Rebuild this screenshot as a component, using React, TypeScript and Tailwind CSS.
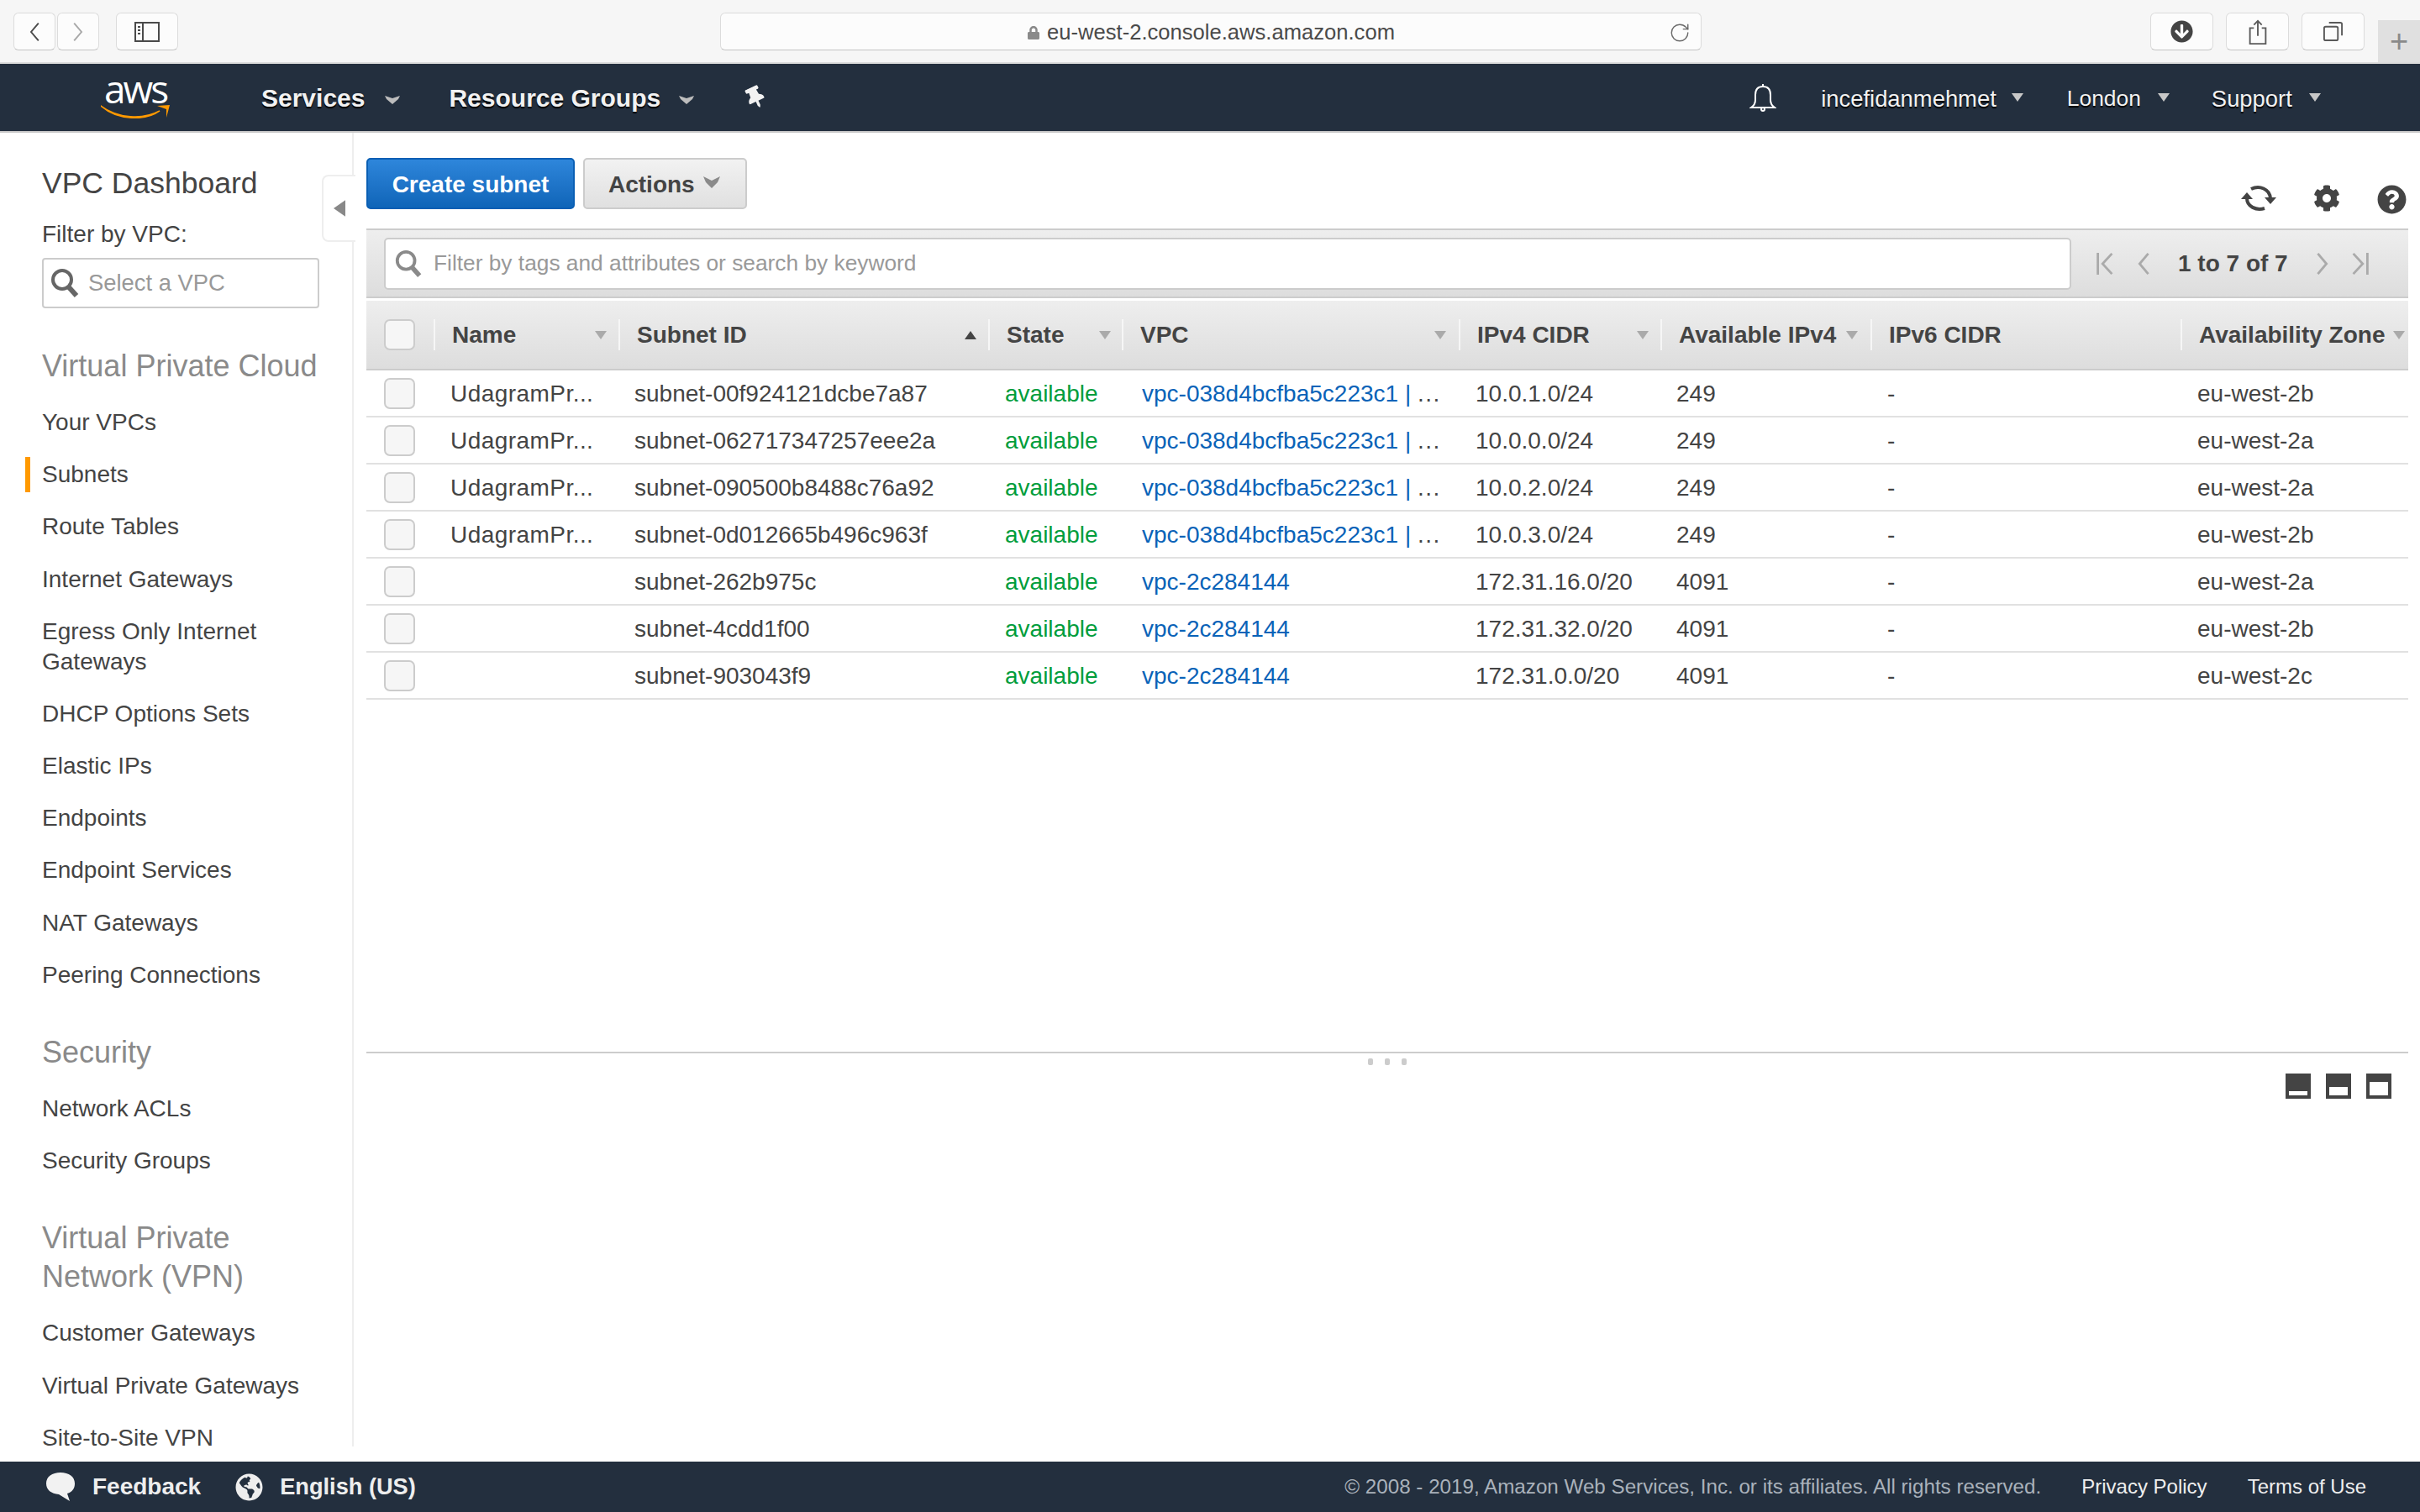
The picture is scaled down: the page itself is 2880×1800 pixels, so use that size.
import { RotateCw } from 'lucide-react';
import { FaArrowCircleDown, FaCog, FaGlobeAmericas, FaLock, FaQuestionCircle, FaThumbtack } from 'react-icons/fa';

const COLS = 'grid grid-cols-[80px_220px_440px_159px_401px_240px_250px_369px_271px]';

const HEADERS = [
  { label: 'Name', arrow: 'down', pad: 'pr-[14px]' },
  { label: 'Subnet ID', arrow: 'up', pad: 'pr-[14px]' },
  { label: 'State', arrow: 'down', pad: 'pr-[13px]' },
  { label: 'VPC', arrow: 'down', pad: 'pr-[15px]' },
  { label: 'IPv4 CIDR', arrow: 'down', pad: 'pr-[14px]' },
  { label: 'Available IPv4', arrow: 'down', pad: 'pr-[15px]' },
  { label: 'IPv6 CIDR', arrow: '', pad: '' },
  { label: 'Availability Zone', arrow: 'down', pad: 'pr-[4px]' },
];

const LONG_VPC = 'vpc-038d4bcfba5c223c1';

const ROWS = [
  ['UdagramPr...', 'subnet-00f924121dcbe7a87', LONG_VPC, '10.0.1.0/24', '249', 'eu-west-2b'],
  ['UdagramPr...', 'subnet-062717347257eee2a', LONG_VPC, '10.0.0.0/24', '249', 'eu-west-2a'],
  ['UdagramPr...', 'subnet-090500b8488c76a92', LONG_VPC, '10.0.2.0/24', '249', 'eu-west-2a'],
  ['UdagramPr...', 'subnet-0d012665b496c963f', LONG_VPC, '10.0.3.0/24', '249', 'eu-west-2b'],
  ['', 'subnet-262b975c', 'vpc-2c284144', '172.31.16.0/20', '4091', 'eu-west-2a'],
  ['', 'subnet-4cdd1f00', 'vpc-2c284144', '172.31.32.0/20', '4091', 'eu-west-2b'],
  ['', 'subnet-903043f9', 'vpc-2c284144', '172.31.0.0/20', '4091', 'eu-west-2c'],
];

const NAV_GROUPS = [
  {
    title: ['Virtual Private Cloud'],
    items: [
      'Your VPCs',
      'Subnets',
      'Route Tables',
      'Internet Gateways',
      'Egress Only Internet Gateways',
      'DHCP Options Sets',
      'Elastic IPs',
      'Endpoints',
      'Endpoint Services',
      'NAT Gateways',
      'Peering Connections',
    ],
  },
  { title: ['Security'], items: ['Network ACLs', 'Security Groups'] },
  {
    title: ['Virtual Private', 'Network (VPN)'],
    items: ['Customer Gateways', 'Virtual Private Gateways', 'Site-to-Site VPN'],
  },
];

const Caret = ({ className }: { className: string }) => (
  <svg viewBox="0 0 14 10" className={className} fill="currentColor">
    <path d="M0 0h14L7 10z" />
  </svg>
);

const NavChevron = () => (
  <svg viewBox="0 0 18 11" className="mt-[4px] h-[11px] w-[18px]" fill="#bdbdbd">
    <path d="M0 1l9 3 9-3-2 4-7 6-7-6z" />
  </svg>
);

const BrowserButton = ({ className, children }: { className: string; children: React.ReactNode }) => (
  <div className={`flex h-[45px] items-center justify-center rounded-[6px] border border-[#dcdcdc] border-b-[#c4c4c4] bg-[#fcfcfc] ${className}`}>
    {children}
  </div>
);

const BrowserBar = () => (
  <div className="flex h-[76px] shrink-0 border-b-2 border-[#dcdcdc] bg-[#f6f6f6] pt-[15px]">
    <BrowserButton className="ml-[16px] w-[50px]">
      <svg viewBox="0 0 16 30" className="h-[24px] w-[14px]" fill="none" stroke="#4a4a4a" strokeWidth="2.4">
        <path d="M14 2 3 15l11 13" />
      </svg>
    </BrowserButton>
    <BrowserButton className="ml-[2px] w-[50px]">
      <svg viewBox="0 0 16 30" className="h-[24px] w-[14px]" fill="none" stroke="#a8a8a8" strokeWidth="2.4">
        <path d="m2 2 11 13L2 28" />
      </svg>
    </BrowserButton>
    <BrowserButton className="ml-[20px] w-[74px]">
      <svg viewBox="0 0 30 24" className="h-[24px] w-[30px]" fill="none" stroke="#4a4a4a" strokeWidth="2">
        <rect x="1" y="1" width="28" height="22" />
        <path d="M10 1v22" />
        <path d="M4 6h3M4 10h3M4 14h3" />
      </svg>
    </BrowserButton>
    <BrowserButton className="relative ml-[645px] w-[1168px] gap-[8px] pt-[2px] text-[25.6px] text-[#4a4a4a]">
      <FaLock className="size-[16px] text-[#8a8a8a]" />
      <span>eu-west-2.console.aws.amazon.com</span>
      <RotateCw className="absolute right-[12px] size-[26px] text-[#6a6a6a]" strokeWidth={1.3} />
    </BrowserButton>
    <BrowserButton className="ml-[534px] w-[75px]">
      <FaArrowCircleDown className="size-[27px] text-[#444]" />
    </BrowserButton>
    <BrowserButton className="ml-[15px] w-[75px]">
      <svg viewBox="0 0 24 32" className="h-[30px] w-[24px]" fill="none" stroke="#5a5a5a" strokeWidth="2">
        <path d="M7 11H2v20h20V11h-5M12 21V2M7 7l5-5 5 5" />
      </svg>
    </BrowserButton>
    <BrowserButton className="ml-[15px] w-[75px]">
      <svg viewBox="0 0 26 26" className="size-[25px]" fill="none" stroke="#5a5a5a" strokeWidth="2">
        <rect x="2" y="7" width="17" height="17" rx="2" />
        <path d="M8 2h14a2 2 0 0 1 2 2v14" />
      </svg>
    </BrowserButton>
    <div className="ml-[16px] mt-[9px] flex h-[50px] w-[50px] items-center justify-center bg-[#e0e0e0] text-[38px] font-light text-[#8a8a8a]">
      +
    </div>
  </div>
);

const TopNav = () => (
  <div className="flex h-[82px] shrink-0 items-center border-b-2 border-[#c8c8c8] bg-[#232f3e] text-[#f2f2f2] [text-shadow:0_2px_1px_#000]">
    <div className="ml-[120px] flex w-[82px] flex-col items-center [text-shadow:none]">
      <span className="h-[30px] font-['Open_Sans',sans-serif] text-[46px] leading-[28px] tracking-[-3px] text-white">aws</span>
      <svg viewBox="0 0 82 18" className="mt-[2px] h-[18px] w-[82px]">
        <path d="M0 3c20 15 50 17 70 6-16 12-50 12-70-6z" fill="#f90" stroke="#f90" strokeWidth="1.5" />
        <path d="M67 3l15-1-4 15 0-10z" fill="#f90" />
      </svg>
    </div>
    <span className="ml-[109px] text-[30px] font-bold">Services</span>
    <span className="ml-[24px]">
      <NavChevron />
    </span>
    <span className="ml-[58px] text-[30px] font-bold">Resource Groups</span>
    <span className="ml-[22px]">
      <NavChevron />
    </span>
    <FaThumbtack className="ml-[60px] size-[26px] -rotate-[25deg]" />
    <svg viewBox="0 0 32 34" className="ml-[1170px] h-[34px] w-[32px]" fill="none" stroke="#fff" strokeWidth="2">
      <path d="M16 1v3" />
      <path d="M16 4c-6 0-9 4-9 10v6c0 4-2 7-5 9h28c-3-2-5-5-5-9v-6c0-6-3-10-9-10z" />
      <circle cx="16" cy="31" r="2" />
    </svg>
    <span className="ml-[53px] pt-[3px] text-[27.4px]">incefidanmehmet</span>
    <Caret className="ml-[18px] h-[10px] w-[14px] text-[#c8c8c8]" />
    <span className="ml-[52px] pt-[3px] text-[26.4px]">London</span>
    <Caret className="ml-[20px] h-[10px] w-[14px] text-[#c8c8c8]" />
    <span className="ml-[50px] pt-[3px] text-[27.4px]">Support</span>
    <Caret className="ml-[20px] h-[10px] w-[14px] text-[#c8c8c8]" />
  </div>
);

const Sidebar = () => (
  <aside className="mb-[18px] w-[421px] shrink-0 border-r-2 border-[#eee] pl-[50px] text-[#444]">
    <h1 className="mt-[37px] text-[35.5px] leading-[46px]">VPC Dashboard</h1>
    <p className="mt-[20px] text-[28px] leading-[36px]">Filter by VPC:</p>
    <div className="mt-[10px] flex h-[60px] w-[330px] items-center rounded-[4px] border-2 border-[#ccc] pl-[8px] text-[27.4px] text-[#999]">
      <svg viewBox="0 0 34 36" className="h-[36px] w-[34px]" fill="none" stroke="#666" strokeWidth="4">
        <circle cx="14" cy="14" r="11" />
        <path d="m22 23 9 10" strokeWidth="6" />
      </svg>
      <span className="ml-[11px]">Select a VPC</span>
    </div>
    {NAV_GROUPS.map((group, index) => (
      <div key={group.title[0]} className={index === 0 ? 'mt-[46px]' : 'mt-[38px]'}>
        <h2 className="pb-[13px] text-[36px] leading-[46px] text-[#8a8a8a]">
          {group.title.map((line) => (
            <div key={line}>{line}</div>
          ))}
        </h2>
        {group.items.map((item) => (
          <div key={item} className="relative flex min-h-[62.2px] w-[320px] items-center py-[13px] text-[28px] leading-[36px]">
            {item === 'Subnets' && <div className="absolute left-[-20px] top-[10px] h-[42px] w-[6px] bg-[#f90]" />}
            {item}
          </div>
        ))}
      </div>
    ))}
  </aside>
);

const Toolbar = () => (
  <div className="flex h-[83px] items-center border-y-2 border-[#ccc] bg-gradient-to-b from-[#eee] to-[#ddd] pl-[21px]">
    <div className="flex h-[62px] w-[2008px] items-center rounded-[5px] border-2 border-[#ccc] bg-white pl-[10px] text-[26.3px] text-[#999]">
      <svg viewBox="0 0 34 36" className="h-[34px] w-[34px]" fill="none" stroke="#8a8a8a" strokeWidth="4">
        <circle cx="14" cy="14" r="11" />
        <path d="m22 23 9 10" strokeWidth="6" />
      </svg>
      <span className="ml-[13px]">Filter by tags and attributes or search by keyword</span>
    </div>
    <svg viewBox="0 0 22 30" className="ml-[29px] h-[28px] w-[22px]" fill="none" stroke="#aaa" strokeWidth="3">
      <path d="M2 1v28M20 2 8 15l12 13" />
    </svg>
    <svg viewBox="0 0 16 30" className="ml-[27px] h-[28px] w-[16px]" fill="none" stroke="#aaa" strokeWidth="3">
      <path d="M14 2 3 15l11 13" />
    </svg>
    <span className="ml-[33px] w-[130px] whitespace-nowrap text-center text-[28px] font-bold text-[#444]">1 to 7 of 7</span>
    <svg viewBox="0 0 16 30" className="ml-[34px] h-[28px] w-[16px]" fill="none" stroke="#aaa" strokeWidth="3">
      <path d="m2 2 11 13L2 28" />
    </svg>
    <svg viewBox="0 0 22 30" className="ml-[26px] h-[28px] w-[22px]" fill="none" stroke="#aaa" strokeWidth="3">
      <path d="M20 1v28M2 2l12 13L2 28" />
    </svg>
  </div>
);

const Checkbox = () => <div className="h-[37px] w-[37px] rounded-[7px] border-2 border-[#ccc] bg-[#f6f6f6]" />;

const SubnetTable = () => (
  <div>
    <div className={`${COLS} mt-[3px] h-[83px] items-center border-b-2 border-[#ccc] bg-gradient-to-b from-[#eee] to-[#ddd] text-[28px] font-bold text-[#444]`}>
      <div className="pl-[21px]">
        <Checkbox />
      </div>
      {HEADERS.map((header) => (
        <div key={header.label} className={`flex h-[37px] min-w-0 items-center justify-between overflow-hidden border-l-2 border-[#f6f6f6] pl-[20px] whitespace-nowrap ${header.pad}`}>
          <span className="pt-[1px]">{header.label}</span>
          {header.arrow === 'down' && <Caret className="h-[10px] w-[14px] shrink-0 text-[#aaa]" />}
          {header.arrow === 'up' && <Caret className="h-[10px] w-[14px] shrink-0 rotate-180 text-[#444]" />}
        </div>
      ))}
    </div>
    {ROWS.map((row) => (
      <div key={row[1]} className={`${COLS} h-[56px] items-center border-b-2 border-[#e1e1e1] text-[28px] text-[#444]`}>
        <div className="pl-[21px]">
          <Checkbox />
        </div>
        <div className="pl-[20px] pt-[2px] tracking-[0.45px]">{row[0]}</div>
        <div className="pl-[19px] pt-[2px]">{row[1]}</div>
        <div className="pl-[20px] pt-[2px] text-[#009d3c]">available</div>
        <div className="pl-[24px] pt-[2px] text-[#0a63b8]">
          {row[2]}
          {row[2] === LONG_VPC && (
            <>
              {' | '}
              <span className="tracking-[1.5px] text-[#444]">...</span>
            </>
          )}
        </div>
        <div className="pl-[20px] pt-[2px]">{row[3]}</div>
        <div className="pl-[19px] pt-[2px]">{row[4]}</div>
        <div className="pl-[20px] pt-[2px]">-</div>
        <div className="pl-[20px] pt-[2px]">{row[5]}</div>
      </div>
    ))}
  </div>
);

const PanelIcon = ({ size }: { size: string }) => (
  <div className="flex h-[30px] w-[30px] flex-col justify-end bg-[#444] px-[4px] pb-[4px]">
    <div className={`bg-white ${size}`} />
  </div>
);

const Main = () => (
  <main className="relative flex-1 pl-[15px] pr-[14px] pt-[30px]">
    <div className="absolute left-[-38px] top-[50px] flex h-[80px] w-[40px] items-center justify-center rounded-l-[8px] border-2 border-r-0 border-[#eee] bg-white">
      <Caret className="h-[14px] w-[20px] rotate-90 text-[#888]" />
    </div>
    <div className="flex h-[61px]">
      <button className="h-[61px] w-[248px] rounded-[5px] border-2 border-[#0a5fb4] bg-gradient-to-b from-[#2e86db] to-[#0f65b8] pt-[2px] text-[28px] font-bold text-white">
        Create subnet
      </button>
      <button className="ml-[10px] flex h-[61px] w-[195px] items-center rounded-[5px] border-2 border-[#ccc] bg-gradient-to-b from-[#f2f2f2] to-[#e0e0e0] pl-[28px] pt-[2px] text-[28px] font-bold text-[#444]">
        Actions
        <svg viewBox="0 0 20 15" className="ml-[10px] mb-[6px] h-[15px] w-[20px]" fill="#8a8a8a">
          <path d="M0 1l10 5 10-5-3 7-7 7-7-7z" />
        </svg>
      </button>
      <div className="ml-auto mt-[32px] flex items-start pr-[2px] text-[#444]">
        <svg viewBox="0 0 42 32" className="h-[32px] w-[42px]" fill="none" stroke="#444" strokeWidth="4">
          <path d="M0 17h14L7 9z" fill="#444" stroke="none" />
          <path d="M7 16c0 10 11 15 21 12" />
          <path d="M28 15h14l-7 8z" fill="#444" stroke="none" />
          <path d="M35 16C34 5 22 0 12 5" />
        </svg>
        <FaCog className="ml-[44px] size-[32px]" />
        <FaQuestionCircle className="ml-[44px] size-[35px]" />
      </div>
    </div>
    <div className="mt-[23px]">
      <Toolbar />
      <SubnetTable />
    </div>
    <div className="mt-[419px] h-[2px] bg-[#ccc]" />
    <div className="flex h-[8px] justify-center gap-[14px] pt-0">
      <div className="mt-[6px] h-[8px] w-[6px] rounded-[2px] bg-[#ccc]" />
      <div className="mt-[6px] h-[8px] w-[6px] rounded-[2px] bg-[#ccc]" />
      <div className="mt-[6px] h-[8px] w-[6px] rounded-[2px] bg-[#ccc]" />
    </div>
    <div className="mt-[16px] flex justify-end gap-[18px] pr-[20px]">
      <PanelIcon size="h-[5px]" />
      <PanelIcon size="h-[10px]" />
      <PanelIcon size="h-[16px]" />
    </div>
  </main>
);

const Footer = () => (
  <footer className="flex h-[60px] shrink-0 items-center bg-[#232f3e] text-white">
    <svg viewBox="0 0 36 36" className="ml-[54px] size-[36px]" fill="#f2f2f2">
      <path d="M18 1C8 1 1 6 1 14c0 8 6 12 15 13l13 8-3-9c6-2 9-6 9-12C35 6 28 1 18 1z" />
    </svg>
    <span className="ml-[20px] text-[28px] font-bold text-[#eee]">Feedback</span>
    <FaGlobeAmericas className="ml-[41px] size-[33px] text-[#eee]" />
    <span className="ml-[20px] text-[27.2px] font-bold text-[#eee]">English (US)</span>
    <span className="ml-auto text-[24.2px] text-[#aab2bb]">© 2008 - 2019, Amazon Web Services, Inc. or its affiliates. All rights reserved.</span>
    <span className="ml-[48px] text-[24px] text-[#eee]">Privacy Policy</span>
    <span className="ml-[48px] mr-[64px] text-[24px] text-[#eee]">Terms of Use</span>
  </footer>
);

const App = () => {
  return (
    <div className="flex h-[1800px] w-[2880px] flex-col overflow-hidden bg-white font-['Liberation_Sans',Arial,sans-serif]">
      <BrowserBar />
      <TopNav />
      <div className="flex min-h-0 flex-1">
        <Sidebar />
        <Main />
      </div>
      <Footer />
    </div>
  );
};

export default App;
